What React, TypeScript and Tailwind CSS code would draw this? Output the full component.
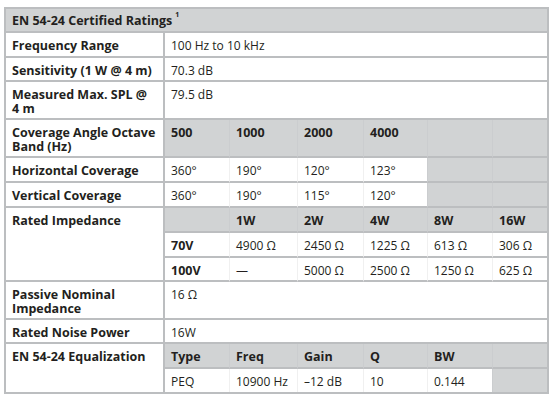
import React from 'react';

const line = 'border-[#bcbec0]';
const gray = 'bg-[#d1d3d4]';

type Cell = { t?: React.ReactNode; g?: boolean; b?: boolean };

const Label: React.FC<{ children: React.ReactNode; rowSpan?: number }> = ({ children, rowSpan }) => (
  <td rowSpan={rowSpan} className={`border-r-2 border-b-2 ${line} px-[6px] pt-[6px] align-top font-bold text-[12.5px] leading-[14px]`}>
    {children}
  </td>
);

const Sub: React.FC<{ cells: Cell[]; last?: boolean }> = ({ cells, last }) => (
  <>
    {cells.map((c, i) => (
      <td
        key={i}
        className={`${last ? '' : `border-b-2 ${line}`} ${i > 0 ? (c.g ? 'border-l border-l-[#cbcdcf]' : 'border-l border-l-[#f0f0f0]') : ''} ${c.g ? gray : 'bg-white'} ${c.b ? 'font-bold text-[12.5px]' : 'text-[12px]'} px-[6px] pt-[6px] align-top leading-[14px] whitespace-nowrap`}
      >
        {c.t}
      </td>
    ))}
  </>
);

const Wide: React.FC<{ children: React.ReactNode }> = ({ children }) => (
  <td colSpan={6} className={`border-b-2 ${line} px-[6px] pt-[6px] align-top text-[12px] leading-[14px]`}>
    {children}
  </td>
);

export default function App() {
  const hdr = (arr: string[]) => arr.map((t) => ({ t, g: true, b: true }));
  return (
    <div className="w-[551px] h-[402px] bg-white pt-[7px] pl-[4px] text-[#231f20]" style={{ fontFamily: '"Open Sans", "Liberation Sans", sans-serif' }}>
      <div className={`w-[545px] border-2 ${line}`}>
        <table className="w-[541px] table-fixed border-separate border-spacing-0">
          <colgroup>
            <col className="w-[159px]" />
            <col className="w-[64px]" />
            <col className="w-[68px]" />
            <col className="w-[66px]" />
            <col className="w-[64px]" />
            <col className="w-[65px]" />
            <col className="w-[55px]" />
          </colgroup>
          <tbody>
            <tr className="h-[24px]">
              <td colSpan={7} className={`${gray} border-b-2 ${line} px-[6px] pt-[5px] align-top font-bold text-[12.5px] leading-[14px]`}>
                EN 54-24 Certified Ratings<sup className="ml-[3px] text-[7px] align-top relative top-[1px]">1</sup>
              </td>
            </tr>
            <tr className="h-[25px]">
              <Label>Frequency Range</Label>
              <Wide>100 Hz to 10 kHz</Wide>
            </tr>
            <tr className="h-[24px]">
              <Label>Sensitivity (1 W @ 4 m)</Label>
              <Wide>70.3 dB</Wide>
            </tr>
            <tr className="h-[38px]">
              <Label>Measured Max. SPL @ 4 m</Label>
              <Wide>79.5 dB</Wide>
            </tr>
            <tr className="h-[38px]">
              <Label>Coverage Angle Octave Band (Hz)</Label>
              <Sub cells={[...hdr(['500', '1000', '2000', '4000']), { g: true }, { g: true }]} />
            </tr>
            <tr className="h-[25px]">
              <Label>Horizontal Coverage</Label>
              <Sub cells={[{ t: '360°' }, { t: '190°' }, { t: '120°' }, { t: '123°' }, { g: true }, { g: true }]} />
            </tr>
            <tr className="h-[25px]">
              <Label>Vertical Coverage</Label>
              <Sub cells={[{ t: '360°' }, { t: '190°' }, { t: '115°' }, { t: '120°' }, { g: true }, { g: true }]} />
            </tr>
            <tr className="h-[25px]">
              <Label rowSpan={3}>Rated Impedance</Label>
              <Sub cells={[{ g: true }, ...hdr(['1W', '2W', '4W', '8W', '16W'])]} />
            </tr>
            <tr className="h-[25px]">
              <Sub cells={[{ t: '70V', b: true }, { t: '4900 Ω' }, { t: '2450 Ω' }, { t: '1225 Ω' }, { t: '613 Ω' }, { t: '306 Ω' }]} />
            </tr>
            <tr className="h-[24px]">
              <Sub cells={[{ t: '100V', b: true }, { t: '—' }, { t: '5000 Ω' }, { t: '2500 Ω' }, { t: '1250 Ω' }, { t: '625 Ω' }]} />
            </tr>
            <tr className="h-[38px]">
              <Label>Passive Nominal Impedance</Label>
              <Wide>16 Ω</Wide>
            </tr>
            <tr className="h-[24px]">
              <Label>Rated Noise Power</Label>
              <Wide>16W</Wide>
            </tr>
            <tr className="h-[25px]">
              <td rowSpan={2} className={`border-r-2 ${line} px-[6px] pt-[6px] align-top font-bold text-[12.5px] leading-[14px]`}>
                EN 54-24 Equalization
              </td>
              <Sub cells={[...hdr(['Type', 'Freq', 'Gain', 'Q', 'BW']), { g: true }]} />
            </tr>
            <tr className="h-[23px]">
              <Sub last cells={[{ t: 'PEQ' }, { t: '10900 Hz' }, { t: '–12 dB' }, { t: '10' }, { t: '0.144' }, { g: true }]} />
            </tr>
          </tbody>
        </table>
      </div>
    </div>
  );
}
